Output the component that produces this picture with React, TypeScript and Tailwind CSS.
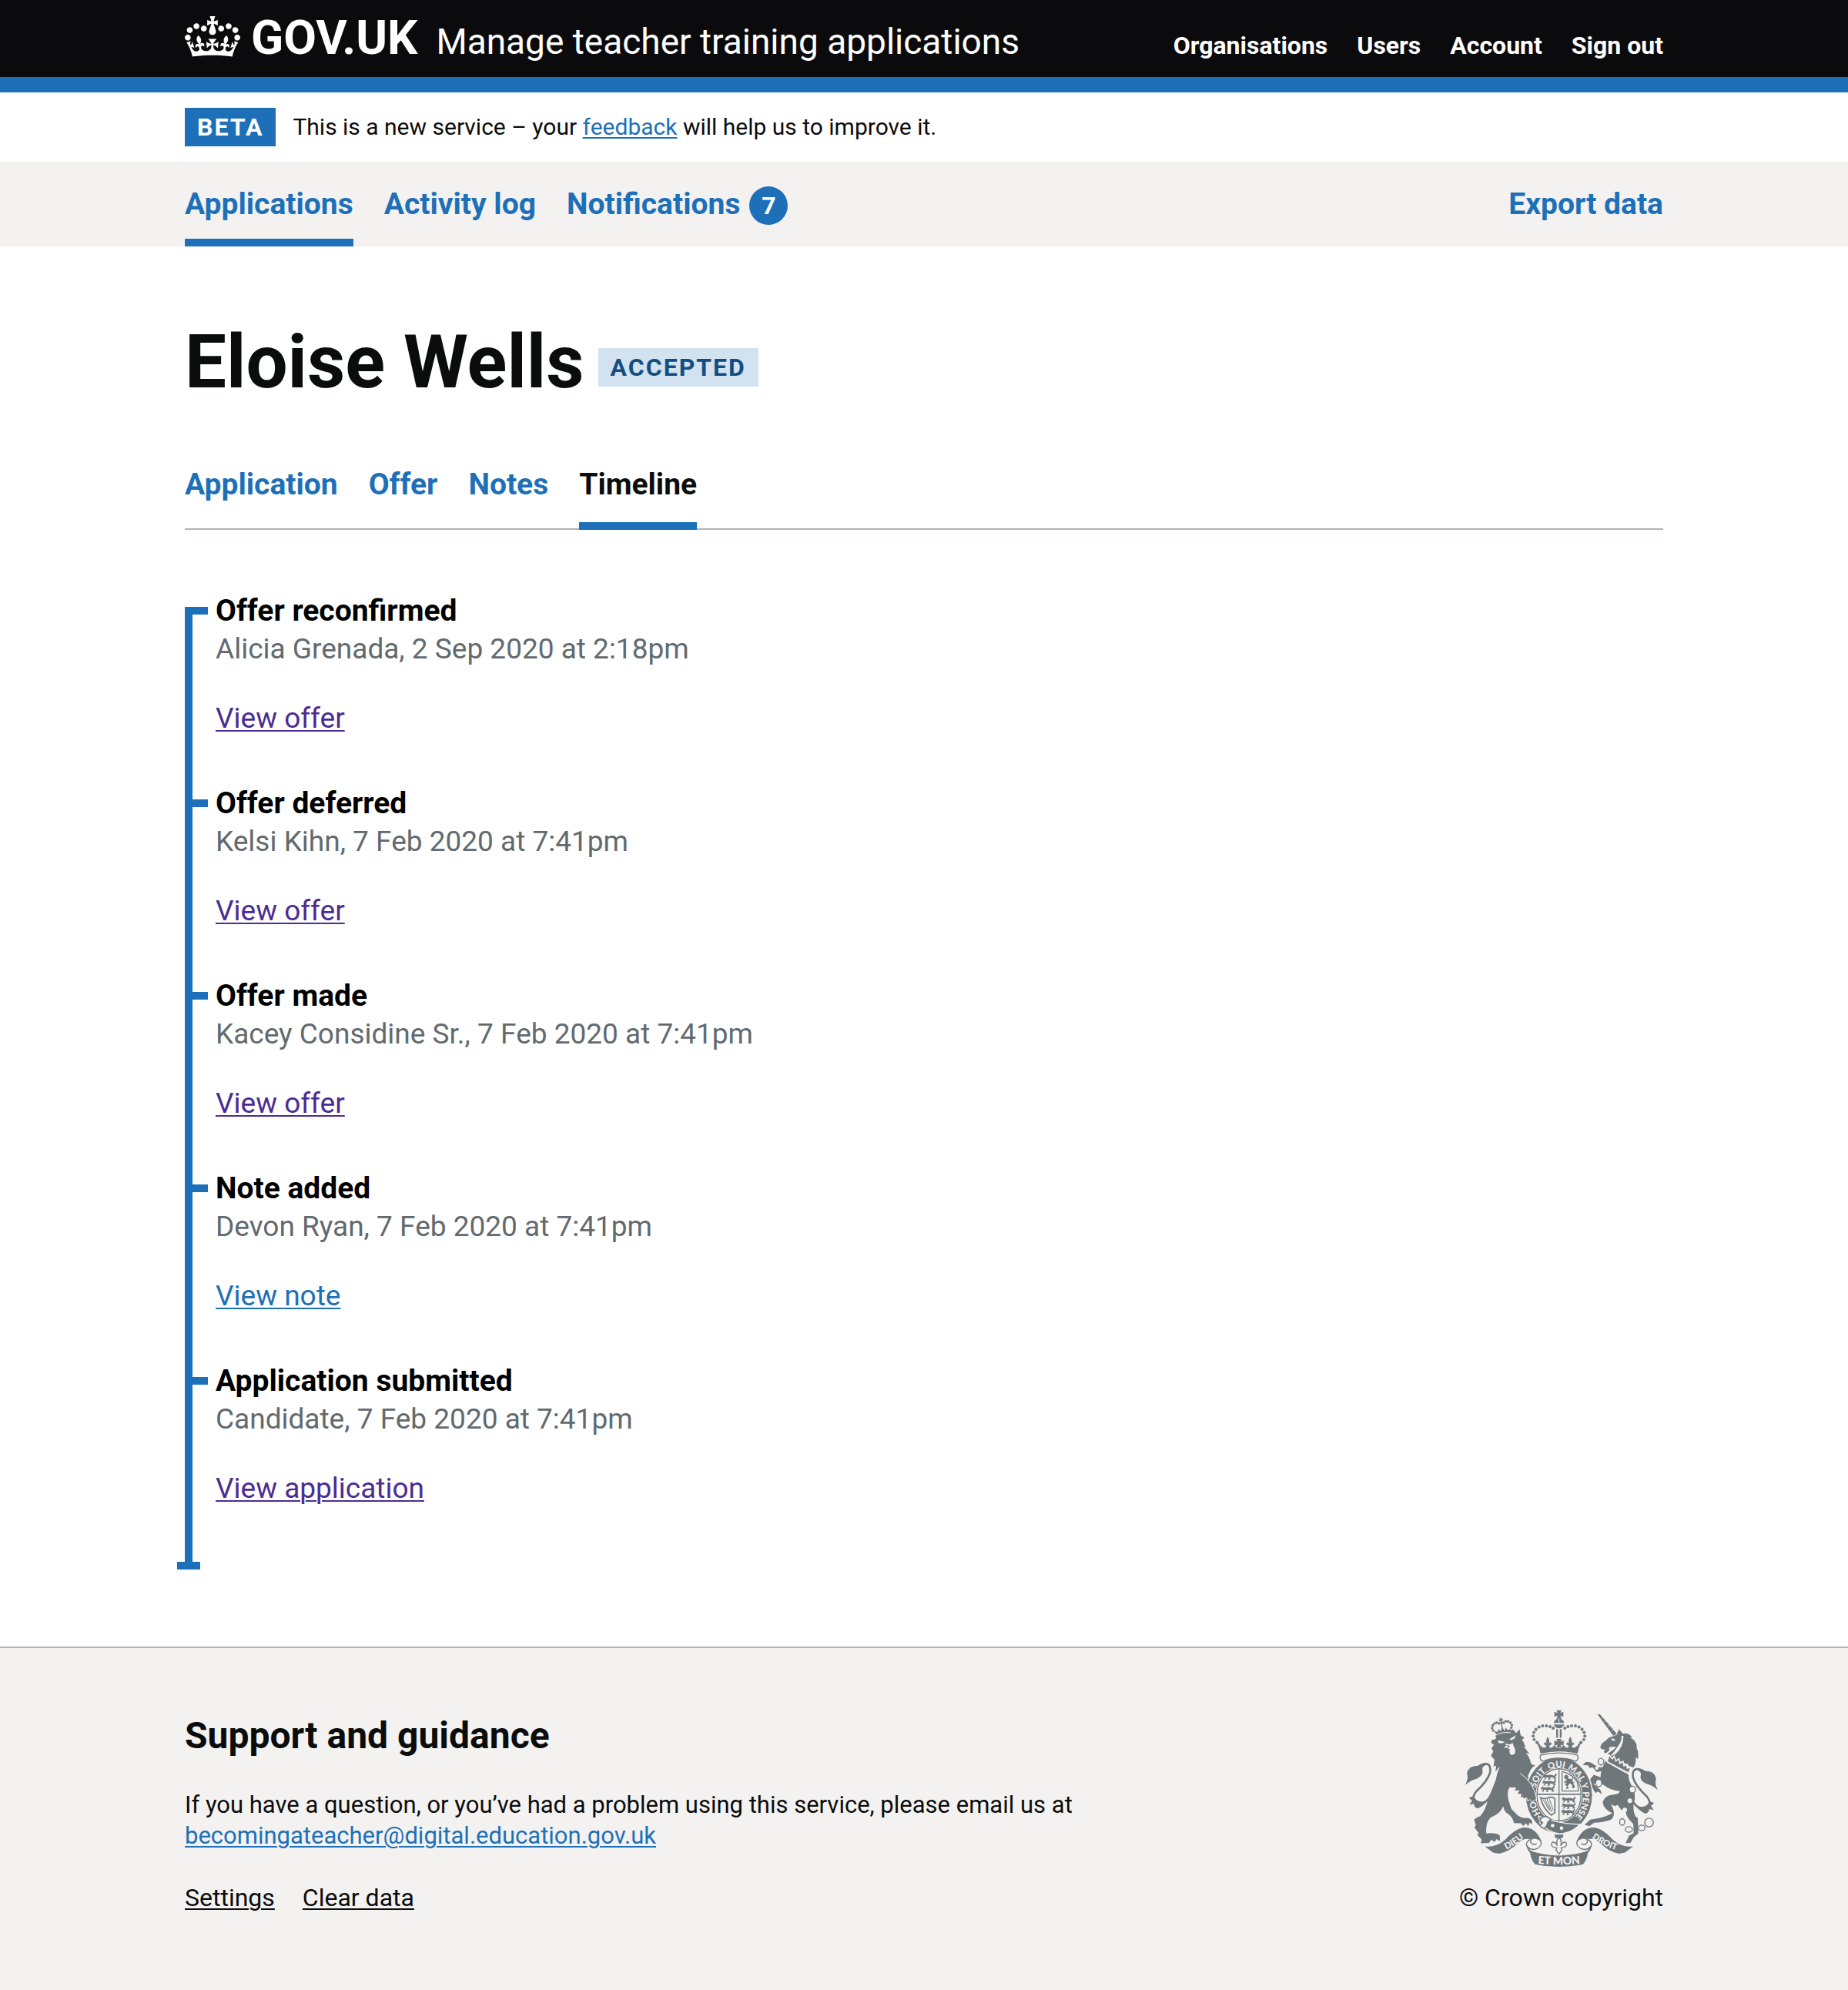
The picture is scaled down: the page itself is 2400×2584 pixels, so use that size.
import type { ReactNode } from "react";

const headerLinks = ["Organisations", "Users", "Account", "Sign out"];
const tabs = ["Application", "Offer", "Notes", "Timeline"];
const events = [
  { title: "Offer reconfirmed", meta: "Alicia Grenada, 2 Sep 2020 at 2:18pm", link: "View offer", visited: true },
  { title: "Offer deferred", meta: "Kelsi Kihn, 7 Feb 2020 at 7:41pm", link: "View offer", visited: true },
  { title: "Offer made", meta: "Kacey Considine Sr., 7 Feb 2020 at 7:41pm", link: "View offer", visited: true },
  { title: "Note added", meta: "Devon Ryan, 7 Feb 2020 at 7:41pm", link: "View note", visited: false },
  { title: "Application submitted", meta: "Candidate, 7 Feb 2020 at 7:41pm", link: "View application", visited: true },
];

function Container({ children, className = "" }: { children: ReactNode; className?: string }) {
  return <div className={`mx-auto w-full max-w-[2400px] px-[240px] ${className}`}>{children}</div>;
}

function Crown() {
  return (
    <svg aria-hidden="true" viewBox="0 0 132 97" className="mt-[3px] h-[53px] w-[72px] shrink-0 self-start" fill="currentColor">
      <path
        fillRule="evenodd"
        d="M25 30.2c3.5 1.5 7.7-.2 9.1-3.7 1.5-3.6-.2-7.8-3.9-9.2-3.6-1.4-7.6.3-9.1 3.9-1.4 3.5.3 7.5 3.9 9zM9 39.5c3.6 1.5 7.8-.2 9.2-3.7 1.5-3.6-.2-7.8-3.9-9.1-3.6-1.5-7.6.2-9.1 3.8-1.4 3.5.3 7.5 3.8 9zM4.4 57.2c3.5 1.5 7.7-.2 9.1-3.8 1.5-3.6-.2-7.7-3.9-9.1-3.5-1.5-7.6.3-9.1 3.8-1.4 3.5.3 7.6 3.9 9.1zm38.3-21.4c3.5 1.5 7.7-.2 9.1-3.8 1.5-3.6-.2-7.7-3.9-9.1-3.6-1.5-7.6.3-9.1 3.8-1.3 3.6.4 7.7 3.9 9.1zm64.4-5.6c-3.6 1.5-7.8-.2-9.1-3.7-1.5-3.6.2-7.8 3.8-9.2 3.6-1.4 7.7.3 9.2 3.9 1.3 3.5-.4 7.5-3.9 9zm15.9 9.3c-3.6 1.5-7.7-.2-9.1-3.7-1.5-3.6.2-7.8 3.7-9.1 3.6-1.5 7.7.2 9.2 3.8 1.5 3.5-.3 7.5-3.8 9zm4.7 17.7c-3.6 1.5-7.8-.2-9.2-3.8-1.5-3.6.2-7.7 3.9-9.1 3.6-1.5 7.7.3 9.2 3.8 1.3 3.5-.4 7.6-3.9 9.1zM89.3 35.8c-3.6 1.5-7.8-.2-9.2-3.8-1.4-3.6.2-7.7 3.9-9.1 3.6-1.5 7.7.3 9.2 3.8 1.4 3.6-.3 7.7-3.9 9.1zM69.7 17.7l8.9 4.7V9.3l-8.9 2.8c-.2-.3-.5-.6-.9-.9L72.4 0H59.6l3.5 11.2c-.3.3-.6.5-.9.9l-8.8-2.8v13.1l8.8-4.7c.3.3.6.7.9.9l-5 15.4v.1c-.2.8-.4 1.6-.4 2.4 0 4.1 3.1 7.5 7 8.1h.2c.3 0 .7.1 1 .1.4 0 .7 0 1-.1h.2c4-.6 7.1-4.1 7.1-8.1 0-.8-.1-1.7-.4-2.4V34l-5.1-15.4c.4-.2.7-.6 1-.9zM66 92.8c16.9 0 32.8 1.1 47.1 3.2 4-16.9 8.9-26.7 14-33.5l-9.6-3.4c1 4.9 1.1 7.2 0 10.2-1.5-1.4-3-4.3-4.2-8.7L108.6 76c2.8-2 5-3.2 7.5-3.3-4.4 9.4-10 11.9-13.6 11.2-4.3-.8-6.3-4.6-5.6-7.9 1-4.7 5.7-5.9 8-.5 4.3-8.7-3-11.4-7.6-8.8 7.1-7.2 7.9-13.5 2.1-21.1-8 6.1-8.1 12.3-4.5 20.8-4.7-5.4-12.1-2.5-9.5 6.2 3.4-5.2 7.9-2 7.2 3.1-.6 4.3-6.4 7.8-13.5 7.2-10.3-.9-10.9-8-11.2-13.8 2.5-.5 7.1 1.8 11 7.3L80.2 60c-4.1 4.4-8 5.3-12.3 5.4 1.4-4.4 8-11.6 8-11.6H55.5s6.4 7.2 7.9 11.6c-4.2-.1-8-1-12.3-5.4l1.4 16.4c3.9-5.5 8.5-7.7 10.9-7.3-.3 5.8-.9 12.8-11.1 13.8-7.2.6-12.9-2.9-13.5-7.2-.7-5 3.8-8.3 7.1-3.1 2.7-8.7-4.6-11.6-9.4-6.2 3.7-8.5 3.6-14.7-4.6-20.8-5.8 7.6-5 13.9 2.2 21.1-4.7-2.6-11.9.1-7.7 8.8 2.3-5.5 7.1-4.2 8.1.5.7 3.3-1.3 7.1-5.7 7.9-3.5.7-9-1.8-13.5-11.2 2.5.1 4.7 1.3 7.5 3.3l-4.7-15.4c-1.2 4.4-2.7 7.2-4.3 8.7-1.1-3-.9-5.3 0-10.2l-9.5 3.4c5 6.9 9.9 16.7 14 33.5 14.8-2.1 30.8-3.2 47.7-3.2z"
      />
    </svg>
  );
}

const INK = "#6f777b";
const PAPER = "#f3f2f1";

const archBeads = [
  [352, 186], [341, 175], [337, 161], [340, 147], [348, 135], [360, 126], [374, 121], [389, 121], [403, 124], [415, 130],
];

/** A small walking lion, three of which fill a quarter of the shield. */
function Passant({ x, y }: { x: number; y: number }) {
  return (
    <path
      transform={`translate(${x} ${y})`}
      d="M2 6 Q8 0 12 5 L18 6 Q32 2 44 8 Q52 4 50 -2 L55 2 Q55 10 48 13 L54 18 L48 23 L42 22 L46 18 L38 15 L28 15 L32 21 L24 24 L20 22 L25 19 L20 15 L14 15 L12 22 L4 23 L9 17 L8 13 L0 16 L3 11Z"
    />
  );
}

function CoatOfArms() {
  const tail = (
    <>
      <path d="M172 392 Q150 432 118 422 Q92 408 114 378 Q160 336 169 302 Q172 268 150 270 Q134 272 132 290" fill="none" stroke={INK} strokeWidth="8" />
      <path d="M150 266 Q130 270 122 277 Q84 276 78 308 Q86 324 72 352 Q92 334 116 328 Q146 316 138 290 Q138 280 150 276Z" />
      <path d="M104 396 L86 402 L98 414 L88 430 L106 426 Q104 438 118 444 Q140 438 158 414 Q130 424 112 408Z" />
    </>
  );
  const ribbonSide = (
    <>
      <path d="M148 592 Q192 598 228 566 Q262 526 296 519 Q346 514 370 574 Q350 554 326 564 Q300 558 280 577 Q242 614 204 621 L180 616Z" />
      <path d="M326 564 Q306 578 312 590 Q330 612 354 600 Q374 588 366 570 Q346 556 334 562 Q320 572 332 582 Q346 590 350 580" fill={PAPER} stroke={INK} strokeWidth="4" />
      <path d="M310 580 Q316 600 330 611 Q380 627 439 628 L439 672 Q380 670 344 662 Q330 648 325 618 Q310 602 310 580Z" />
    </>
  );
  return (
    <svg role="img" aria-label="Royal coat of arms" viewBox="72 58 752 614" className="h-[204px] w-[250px]" fill={INK}>
      {/* lion */}
      {tail}
      <path d="M172 186 L176 176 Q188 176 193 168 L189 160 Q222 140 260 136 L270 150 L284 135 L288 158 L303 168 L293 176 Q302 186 308 206 L297 199 Q310 214 323 232 L307 226 Q323 242 327 262 Q328 274 345 276 Q330 284 324 300 L316 318 Q330 340 340 360 Q350 380 347 402 Q350 414 338 412 L334 418 L325 408 L316 414 L313 404 L299 406 L304 394 L288 402 L292 388 L276 386 L284 373 L266 374 L270 362 L244 362 Q230 385 246 428 Q250 448 266 460 Q278 478 302 482 Q320 478 332 490 L333 506 L322 500 L318 513 L308 502 L298 513 L290 502 L262 501 Q258 480 240 466 Q224 458 220 436 Q210 464 170 480 Q150 500 154 542 Q180 538 204 546 Q210 556 206 572 L194 564 L186 576 L174 566 L164 579 L132 580 L136 566 L118 546 L124 540 L107 518 L113 510 L106 488 Q116 478 130 474 Q152 450 160 408 Q176 372 192 330 Q196 300 208 280 Q196 290 190 300 L192 276 L182 280 L186 254 L172 238 L181 222 L174 208 L184 196Z" />
      <g fill={PAPER}>
        <path d="M198 178 L226 184 L216 190 L202 188Z M244 174 L268 158 L265 170 L252 177Z" />
        <path d="M222 208 L232 198 L226 190 L244 194 L258 188 L260 200 Q270 214 266 228 Q256 240 246 230 Q242 220 246 212 L232 206Z" />
      </g>
      <path d="M232 196 L246 200 L240 208Z" />
      {/* lion's crown */}
      <g transform="rotate(-9 216 130)">
        <path d="M190 156 L184 136 L196 142 L202 130 L208 142 L216 126 L224 142 L230 130 L236 142 L248 136 L242 156 Q216 148 190 156Z" />
        {[[180, 134], [177, 124], [181, 114], [189, 108], [198, 106], [207, 110], [225, 110], [234, 106], [243, 108], [251, 114], [255, 124], [252, 134]].map(([x, y]) => (
          <circle key={x} cx={x} cy={y} r="5" />
        ))}
        <path d="M212 90 H220 L218 96 L224 94 V102 L218 100 L221 112 Q216 117 211 112 L214 100 L208 102 V94 L214 96Z M214 114 H218 V132 H214Z" />
        <path d="M188 153 Q216 144 246 153" fill="none" stroke={PAPER} strokeWidth="3" />
      </g>

      {/* unicorn */}
      <g transform="translate(896 20) scale(-1 1)">{tail}</g>
      <path d="M588 75 L598 76 L664 152 L650 160Z" />
      <path d="M604 92 L610 84 M614 106 L624 98 M628 124 L640 116 M640 142 L654 134" fill="none" stroke={PAPER} strokeWidth="1.5" />
      <path d="M650 162 L664 156 L672 134 L688 152 Q708 146 724 166 L716 166 Q744 180 742 208 L737 202 Q752 220 746 252 L738 242 Q740 268 730 284 L716 280 Q690 260 664 258 L632 238 L628 230 L640 222 Q652 214 662 204 Q640 200 632 208 L636 216 L622 228 L612 224 L618 214 L604 212 L599 204 L606 190 Q622 180 632 168Z" />
      <path d="M640 172 Q650 168 660 176 L650 180Z M690 160 Q690 204 660 230 Q652 238 640 238 Q660 216 672 196 Q684 178 682 160Z" fill={PAPER} />
      <path d="M620 258 L710 304 Q706 334 730 368 Q738 398 732 420 Q724 444 736 474 L746 482 L748 542 L730 556 L718 578 L698 580 L712 550 L730 540 L728 504 Q700 478 700 460 Q678 452 668 430 Q654 440 640 426 Q664 466 642 488 Q608 500 576 500 L556 513 L538 508 L560 488 L600 481 Q630 472 646 462 Q612 448 609 420 Q614 394 650 390 Q674 388 676 376 Q640 374 612 352 L596 344 L572 348 L600 372 L606 388 L590 378 L580 384 L566 358 L558 362 L557 334 L574 312 L600 322 L603 298 L586 302 L570 284 L556 286 L554 276 L530 274 L544 262 L562 264 L590 282 L608 284Z" />
      <path d="M626 262 L634 234 L646 250 L654 240 L660 258 L672 250 L676 268 L688 260 L692 278 L704 272 L704 286 L720 284 L708 308Z" fill={INK} stroke={PAPER} strokeWidth="5" />
      <path d="M628 262 L708 303" stroke={PAPER} strokeWidth="3" />
      <g fill={PAPER} stroke={INK} strokeWidth="4">
        <ellipse cx="602" cy="261" rx="11" ry="13" />
        <ellipse cx="593" cy="345" rx="12" ry="14" />
        <ellipse cx="725" cy="370" rx="12" ry="13" />
        <ellipse cx="685" cy="497" rx="10" ry="13" />
        <ellipse cx="711" cy="526" rx="14" ry="11" />
        <ellipse cx="761" cy="520" rx="13" ry="11" />
        <circle cx="790" cy="499" r="17" />
      </g>
      <g fill={PAPER}>
        <circle cx="586" cy="286" r="7" />
        <circle cx="715" cy="414" r="9" />
        <circle cx="695" cy="450" r="9" />
      </g>

      {/* garter and shield */}
      <ellipse cx="438" cy="393" rx="131" ry="150" stroke={PAPER} strokeWidth="4" />
      <path id="garter" d="M438 503 A94 110 0 0 1 438 283 A94 110 0 0 1 438 503" fill="none" />
      <g fill={PAPER} className="font-['Lato'] text-[34px] font-black" textAnchor="middle">
        {[["HO", "17.5%"], ["SOIT", "35.5%"], ["QUI", "48.5%"], ["MAL", "61%"], ["Y", "69.5%"], ["PENSE", "81%"]].map(([word, at]) => (
          <text key={word}>
            <textPath href="#garter" startOffset={at}>{word}</textPath>
          </text>
        ))}
      </g>
      <ellipse cx="438" cy="391" rx="91" ry="107" fill={PAPER} />
      <ellipse cx="438" cy="391" rx="86" ry="102" fill="none" stroke={INK} strokeWidth="4" />
      <path d="M436 288 H440 V386 H525 V391 H440 V496 H436 V391 H352 V386 H436Z" />
      <Passant x={374} y={308} />
      <Passant x={372} y={332} />
      <Passant x={366} y={356} />
      <Passant x={448} y={398} />
      <Passant x={448} y={422} />
      <Passant x={446} y={446} />
      <path d="M450 300 Q488 308 510 342 L514 376 H450Z" fill="none" stroke={INK} strokeWidth="4" />
      <path d="M458 316 L468 312 L476 318 L472 326 L486 330 L494 322 L490 338 L500 344 L492 346 L500 356 L496 366 L488 362 L490 352 L480 346 L472 356 L476 366 L464 368 L470 358 L462 352 L468 342 L458 346 L460 338 L470 332 L460 328Z" />
      <path d="M366 402 Q384 410 396 402 Q410 396 422 406 V460 L408 470 Q376 446 366 402Z" fill="none" stroke={INK} strokeWidth="5" />
      <path d="M376 410 L398 448 M384 410 L404 454 M392 408 L410 458 M400 406 L416 452" stroke={INK} strokeWidth="3" />
      {/* lion's paw over the garter */}
      <path d="M286 306 Q340 345 349 400 Q350 416 340 412 L334 420 L325 409 L316 415 L311 402 L296 400 L292 372 L286 340Z" />
      <path d="M286 306 Q340 345 349 400 Q350 416 340 412 L334 420 L325 409 L316 415 L311 402" fill="none" stroke={PAPER} strokeWidth="3" />
      {/* buckle and strap */}
      <path d="M358 474 Q440 506 520 506 Q486 540 440 543 Q396 538 364 502Z" stroke={PAPER} strokeWidth="4" />
      <path d="M370 482 Q378 472 394 478 L406 488 Q394 494 392 504 L384 520 Q368 522 364 510 L374 500 L362 490Z" fill={PAPER} stroke={INK} strokeWidth="4" />
      <circle cx="413" cy="511" r="7" fill={PAPER} />
      <circle cx="448" cy="521" r="7" fill={PAPER} />
      {/* pendant */}
      <path d="M420 546 H456 L452 560 H424Z" />
      <path d="M438 556 Q452 572 444 590 Q452 574 464 576 Q472 586 462 594 L446 598 L450 606 L438 622 L426 606 L430 598 L414 594 Q404 586 412 576 Q424 574 432 590 Q424 572 438 556Z" fill={PAPER} stroke={INK} strokeWidth="4" />

      {/* imperial crown */}
      <path d="M366 236 Q438 218 510 236 Q518 250 504 260 Q438 234 372 260 Q360 250 366 236Z" fill={PAPER} stroke={INK} strokeWidth="4" />
      <path d="M350 184 Q362 186 366 202 Q374 196 372 206 H384 Q394 196 402 206 H412 Q418 192 426 204 L430 208 H446 L450 204 Q458 192 464 206 H474 Q482 196 492 206 H504 Q502 196 510 202 Q514 186 526 184 Q514 208 510 230 Q438 212 366 230 Q362 208 350 184Z" />
      {archBeads.map(([x, y]) => (
        <g key={`${x}-${y}`}>
          <circle cx={x} cy={y} r="6" />
          <circle cx={876 - x} cy={y} r="6" />
        </g>
      ))}
      <path d="M428 60 H448 L443 71 L455 66 V86 L443 81 L448 93 H428 L433 81 L420 86 V66 L433 71Z" />
      <path d="M418 110 Q420 93 438 93 Q456 93 458 110Z M416 116 H460 L450 128 Q438 134 426 128Z" />
      <path d="M438 94 V110" stroke={PAPER} strokeWidth="3" />
      <path d="M427 134 H434 V168 H427Z M441 134 H448 V168 H441Z" />
      <path d="M428 172 H448 L444 184 L456 178 V200 L444 194 L448 206 H428 L432 194 L420 200 V178 L432 184Z" />
      {[394, 482].map((x) => (
        <path key={x} transform={`translate(${x} 164)`} d="M0 0 Q10 12 4 26 Q10 18 15 26 Q14 34 6 34 L8 44 H-8 L-6 34 Q-14 34 -15 26 Q-10 18 -4 26 Q-10 12 0 0Z" />
      ))}

      {/* motto ribbon */}
      {ribbonSide}
      <g transform="translate(876 0) scale(-1 1)">{ribbonSide}</g>
      <path id="motto-left" d="M208 613 Q262 598 320 541" fill="none" />
      <path id="motto-right" d="M546 544 Q606 594 686 614" fill="none" />
      <path id="motto-centre" d="M346 659 Q438 668 530 659" fill="none" />
      <g fill={PAPER} className="font-['Lato'] font-black" textAnchor="middle">
        <text className="text-[35px]"><textPath href="#motto-left" startOffset="50%">DIEU</textPath></text>
        <text className="text-[34px]"><textPath href="#motto-right" startOffset="50%">DROIT</textPath></text>
        <text className="text-[42px]"><textPath href="#motto-centre" startOffset="50%">ET MON</textPath></text>
      </g>
    </svg>
  );
}

export default function App() {
  return (
    <div className="min-h-screen bg-white font-['Roboto',sans-serif] text-[#0b0c0c]">
      <header className="border-b-[20px] border-[#1d70b8] bg-[#0b0b0d] text-white">
        <Container className="flex h-[100px] items-baseline justify-between pt-[18px]">
          <div className="flex items-baseline">
            <a href="#home" className="flex items-baseline gap-3.5 text-[62px] leading-[62px] font-bold">
              <Crown />
              GOV.UK
            </a>
            <a href="#service" className="ml-6 text-[46px] leading-[50px]">Manage teacher training applications</a>
          </div>
          <nav aria-label="Account" className="flex gap-[38px] text-[32px] leading-[40px] font-bold">
            {headerLinks.map((label) => (
              <a key={label} href="#account">{label}</a>
            ))}
          </nav>
        </Container>
      </header>

      <Container className="flex items-center gap-[22px] py-5 leading-[50px]">
        <strong className="bg-[#1d70b8] px-4 text-[32px] tracking-[2px] text-white">BETA</strong>
        <p className="text-[30px]">
          This is a new service – your{" "}
          <a href="#feedback" className="text-[#1d70b8] underline decoration-2 underline-offset-[3px]">feedback</a> will help us to improve it.
        </p>
      </Container>

      <div className="bg-[#f3f2f1]">
        <Container>
          <nav aria-label="Primary" className="flex gap-10 text-[39px] leading-[50px] font-bold text-[#1d70b8]">
            <a href="#applications" aria-current="page" className="border-b-[10px] border-[#1d70b8] pt-[30px] pb-5">Applications</a>
            <a href="#activity" className="pt-[30px]">Activity log</a>
            <a href="#notifications" className="flex items-start gap-3 pt-[30px]">
              Notifications
              <span className="mt-0.5 flex size-[50px] items-center justify-center rounded-full bg-[#1d70b8] text-[32px] text-white">7</span>
            </a>
            <a href="#export" className="ml-auto pt-[30px]">Export data</a>
          </nav>
        </Container>
      </div>

      <Container className="pt-[100px] pb-[100px]">
        <main>
          <div className="flex items-end gap-[18px]">
            <h1 className="text-[96px] leading-[100px] font-bold">Eloise Wells</h1>
            <strong className="mb-[18px] bg-[#d2e2f1] px-4 text-[32px] leading-[50px] tracking-[2px] text-[#144e81]">ACCEPTED</strong>
          </div>

          <nav aria-label="Application sections" className="mt-[84px] flex gap-10 text-[39px] leading-[50px] font-bold text-[#1d70b8] shadow-[inset_0_-2px_0_#b1b4b6]">
            {tabs.map((label) =>
              label === "Timeline" ? (
                <a key={label} href="#timeline" aria-current="page" className="border-b-[10px] border-[#1d70b8] pb-6 text-[#0b0c0c]">{label}</a>
              ) : (
                <a key={label} href="#section">{label}</a>
              ),
            )}
          </nav>

          <ol className="relative mt-20 pb-5 leading-[50px]">
            {events.map(({ title, meta, link, visited }) => (
              <li
                key={title}
                className="relative pb-[60px] pl-10 before:absolute before:top-5 before:-bottom-5 before:left-0 before:w-2.5 before:bg-[#1d70b8] after:absolute after:top-5 after:left-0 after:h-2.5 after:w-[30px] after:bg-[#1d70b8]"
              >
                <h2 className="text-[39px] font-bold text-black">{title}</h2>
                <p className="text-[37px] text-[#626a6e]">{meta}</p>
                <p className="mt-10 text-[37px]">
                  <a
                    href="#event"
                    className={`underline decoration-2 underline-offset-[3px] ${visited ? "text-[#4c2c92]" : "text-[#1d70b8]"}`}
                  >
                    {link}
                  </a>
                </p>
              </li>
            ))}
            <li aria-hidden="true" className="absolute bottom-0 -left-2.5 h-2.5 w-[30px] bg-[#1d70b8]" />
          </ol>
        </main>
      </Container>

      <footer className="border-t-2 border-[#b1b4b6] bg-[#f3f2f1]">
        <Container className="flex items-end justify-between pt-20 pb-[100px] text-[32px] leading-[40px]">
          <div className="max-w-[1280px]">
            <h2 className="text-[48px] leading-[52px] font-bold">Support and guidance</h2>
            <p className="mt-11 text-[31px]">
              If you have a question, or you’ve had a problem using this service, please email us at{" "}
              <a href="mailto:becomingateacher@digital.education.gov.uk" className="text-[#1d70b8] underline decoration-2 underline-offset-[3px]">
                becomingateacher@digital.education.gov.uk
              </a>
            </p>
            <nav aria-label="Support" className="mt-10 flex gap-9">
              <a href="#settings" className="underline decoration-2 underline-offset-[3px]">Settings</a>
              <a href="#clear" className="underline decoration-2 underline-offset-[3px]">Clear data</a>
            </nav>
          </div>
          <div className="flex flex-col items-center gap-5">
            <CoatOfArms />
            <a href="#copyright">© Crown copyright</a>
          </div>
        </Container>
      </footer>
    </div>
  );
}
